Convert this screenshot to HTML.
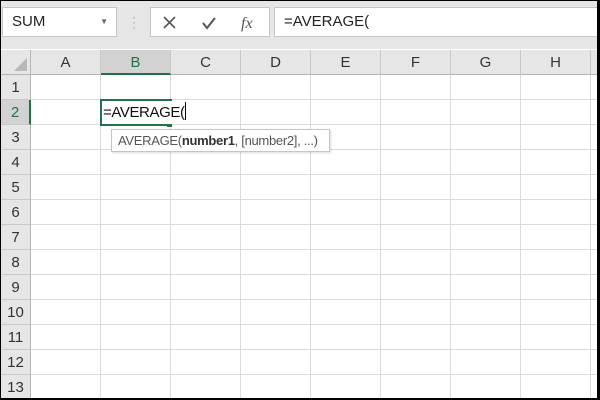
<!DOCTYPE html>
<html><head><style>
*{margin:0;padding:0;box-sizing:border-box}
body{width:600px;height:400px;overflow:hidden;background:#000;font-family:"Liberation Sans",sans-serif;position:relative}
#w{position:absolute;left:1px;top:1px;width:596px;height:397px;background:#fff;overflow:hidden}
.a{position:absolute}
.tb{left:0;top:0;width:600px;height:48px;background:#e6e6e6}
.box{background:#fff;border:1px solid #c6c6c6}
.ch{top:49px;height:25px;background:#e6e6e6;border-right:1px solid #c8c8c8;border-bottom:1px solid #b5b5b5;text-align:center;font-size:15px;line-height:25px;color:#333}
.rh{left:0;width:30px;height:25px;background:#e6e6e6;border-bottom:1px solid #c8c8c8;border-right:1px solid #b5b5b5;text-align:center;font-size:15px;line-height:25px;color:#333}
.vl{top:74px;width:1px;height:330px;background:#dadada}
.hl{left:30px;width:570px;height:1px;background:#dadada}
</style></head><body><div id="w">
<div class="a tb"></div>
<div class="a box" style="left:1px;top:6px;width:115px;height:30px;font-size:15px;line-height:28px;padding-left:9px;color:#222">SUM<span style="position:absolute;right:8px;top:0;font-size:8px;color:#666">▼</span></div>
<div class="a" style="left:131px;top:14px;color:#999;font-size:12px;line-height:5px">·<br>·<br>·</div>
<div class="a box" style="left:149px;top:6px;width:120px;height:30px"></div>
<svg class="a" style="left:160px;top:12px" width="110" height="20"><path d="M3 4l11 11M14 4L3 15" stroke="#555" stroke-width="1.6" fill="none"/><path d="M42 10l4 5 8-10" stroke="#555" stroke-width="2" fill="none"/><text x="80" y="15" font-family="Liberation Serif" font-style="italic" font-size="16" fill="#555">fx</text></svg>
<div class="a box" style="left:273px;top:6px;width:330px;height:30px;font-size:15px;line-height:28px;padding-left:9px;color:#222">=AVERAGE(</div>
<div class="a" style="left:0;top:49px;width:30px;height:25px;background:#e6e6e6;border-right:1px solid #b5b5b5;border-bottom:1px solid #b5b5b5"><div style="position:absolute;right:3px;bottom:3px;width:0;height:0;border-left:13px solid transparent;border-bottom:13px solid #b8b8b8"></div></div>
<div class="a ch" style="left:30px;width:70px">A</div>
<div class="a ch" style="left:100px;width:70px;background:#d2d2d2;color:#217346;border-bottom:2px solid #217346">B</div>
<div class="a ch" style="left:170px;width:70px">C</div>
<div class="a ch" style="left:240px;width:70px">D</div>
<div class="a ch" style="left:310px;width:70px">E</div>
<div class="a ch" style="left:380px;width:70px">F</div>
<div class="a ch" style="left:450px;width:70px">G</div>
<div class="a ch" style="left:520px;width:70px">H</div>
<div class="a ch" style="left:590px;width:20px"></div>
<div class="a rh" style="top:74px">1</div>
<div class="a rh" style="top:99px;background:#d2d2d2;color:#217346;border-right:2px solid #217346">2</div>
<div class="a rh" style="top:124px">3</div>
<div class="a rh" style="top:149px">4</div>
<div class="a rh" style="top:174px">5</div>
<div class="a rh" style="top:199px">6</div>
<div class="a rh" style="top:224px">7</div>
<div class="a rh" style="top:249px">8</div>
<div class="a rh" style="top:274px">9</div>
<div class="a rh" style="top:299px">10</div>
<div class="a rh" style="top:324px">11</div>
<div class="a rh" style="top:349px">12</div>
<div class="a rh" style="top:374px">13</div>
<div class="a vl" style="left:99px"></div><div class="a vl" style="left:169px"></div><div class="a vl" style="left:239px"></div><div class="a vl" style="left:309px"></div><div class="a vl" style="left:379px"></div><div class="a vl" style="left:449px"></div><div class="a vl" style="left:519px"></div><div class="a vl" style="left:589px"></div>
<div class="a hl" style="top:98px"></div><div class="a hl" style="top:123px"></div><div class="a hl" style="top:148px"></div><div class="a hl" style="top:173px"></div><div class="a hl" style="top:198px"></div><div class="a hl" style="top:223px"></div><div class="a hl" style="top:248px"></div><div class="a hl" style="top:273px"></div><div class="a hl" style="top:298px"></div><div class="a hl" style="top:323px"></div><div class="a hl" style="top:348px"></div><div class="a hl" style="top:373px"></div>
<div class="a" style="left:99px;top:98px;width:72px;height:27px;border:2px solid #217346;background:#fff"></div>
<div class="a" style="left:166px;top:121px;width:5px;height:5px;background:#217346"></div>
<div class="a" style="left:102px;top:100px;height:23px;font-size:15px;letter-spacing:-0.4px;line-height:23px;color:#111;background:#fff;padding-right:2px">=AVERAGE(<span style="display:inline-block;width:1px;height:18px;background:#000;vertical-align:-3px"></span></div>
<div class="a" style="left:110px;top:128px;width:219px;height:23px;background:#fff;border:1px solid #c6c6c6;box-shadow:1px 1px 2px rgba(0,0,0,.15);font-size:13px;letter-spacing:-0.3px;line-height:21px;padding-left:6px;color:#555;white-space:nowrap">AVERAGE(<b style="color:#333">number1</b>, [number2], ...)</div>
</div></body></html>
